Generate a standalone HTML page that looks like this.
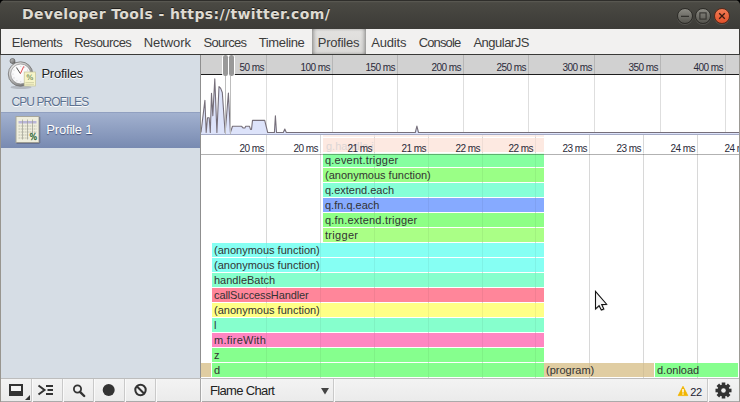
<!DOCTYPE html>
<html><head><meta charset="utf-8"><title>Developer Tools</title>
<style>
*{box-sizing:border-box;margin:0;padding:0}
html,body{width:740px;height:402px;overflow:hidden;background:#000}
body{font-family:"Liberation Sans","DejaVu Sans",sans-serif;font-size:13px;color:#222;position:relative}
div,span,svg{position:absolute}
#win{left:0;top:0;width:740px;height:402px;background:#3c3b37;border-radius:5px 5px 0 0;overflow:hidden}
#titlebar{left:0;top:0;width:740px;height:29px;background:linear-gradient(#2f2e2b 0,#2f2e2b 1px,#605f58 1px,#504f49 2px,#4a4943 3px,#3c3b37 100%);border-radius:5px 5px 0 0}
#title{left:22px;top:5px;font-family:"DejaVu Sans","Liberation Sans",sans-serif;font-weight:bold;font-size:14px;line-height:18px;color:#dfdbd2;white-space:nowrap;letter-spacing:0.38px;text-shadow:0 -1px 0 #22211f}
.wb{top:7.5px;width:16px;height:16px;border-radius:50%;border:1px solid #2d2c28;background:linear-gradient(#8b8a83,#55544e);box-shadow:0 1px 0 rgba(255,255,255,.12)}
#tabs{left:1px;top:29px;width:738px;height:26px;background:#f2f1f0;border-bottom:1px solid #3a3a38}
.tab{top:6px;line-height:16px;font-size:13px;color:#3c3c3c;white-space:nowrap}
#seltab{left:311px;top:0;width:54px;height:25px;background:linear-gradient(#e3e2e0,#dad9d7);box-shadow:inset 3px 0 4px -2px rgba(0,0,0,.45),inset -3px 0 4px -2px rgba(0,0,0,.45)}
#side{left:1px;top:55px;width:199px;height:323px;background:#d6dde5}
#sep{left:200px;top:55px;width:1px;height:347px;background:#8f8f8f}
#main{left:201px;top:55px;width:538px;height:323px;background:#fff;overflow:hidden}
#status{left:1px;top:378px;width:738px;height:24px;background:linear-gradient(#f3f3f3,#ebebeb);border-top:1px solid #bdbdbd;border-bottom:1px solid #aaa}
#lb{left:0;top:55px;width:1px;height:347px;background:#98958f}
#rb{left:739px;top:29px;width:1px;height:373px;background:linear-gradient(#3c3b37 0,#3c3b37 26px,#9c9a95 26px)}
.sh{font-size:13px;line-height:16px;white-space:nowrap}
#oruler{left:0;top:0;width:538px;height:20px;background:#d1d1d1;border-bottom:1px solid #1c1c1c}
.ol{top:7px;font-size:10px;line-height:12px;letter-spacing:-0.6px;color:#2b2b3a;white-space:nowrap;text-align:right;width:60px}
.og{top:0;width:1px;height:80px;background:rgba(0,0,0,.13)}
.fg{top:80px;width:1px;height:243px;background:rgba(0,0,0,.05)}
.fgu{top:80px;width:1px;height:243px;background:#e4e4e4}
.fl{top:88px;font-size:10px;line-height:12px;letter-spacing:-0.6px;color:#2b2b3a;white-space:nowrap;text-align:right;width:60px}
.bar{height:14px;font-size:11px;line-height:14px;color:#333;white-space:nowrap;overflow:hidden;padding-left:2px}
.sbsep{top:0;width:1px;height:23px;background:#c9c9c9;box-shadow:1px 0 0 #fafafa}
</style></head><body>
<div id="win">
 <div id="titlebar">
  <div id="title">Developer Tools - https://twitter.com/</div>
  <div class="wb" style="left:677.4px"><svg width="14" height="14" viewBox="0 0 14 14" style="left:0;top:0"><path d="M3 7.4h8" stroke="#33322e" stroke-width="1.2"/></svg></div>
  <div class="wb" style="left:695.3px"><svg width="14" height="14" viewBox="0 0 14 14" style="left:0;top:0"><rect x="3.9" y="3.9" width="6.2" height="6.2" fill="none" stroke="#33322e" stroke-width="1.1"/></svg></div>
  <div class="wb" style="left:713.5px;background:linear-gradient(#f37c55,#e2512a);border-color:#5a2a1a"><svg width="14" height="14" viewBox="0 0 14 14" style="left:0;top:0"><path d="M4.2 4.2l5.6 5.6M9.8 4.2l-5.6 5.6" stroke="#3a1a10" stroke-width="1.3"/></svg></div>
 </div>
 <div id="tabs"><div id="seltab"></div>
<span class="tab" style="left:10.75px;letter-spacing:-0.463px">Elements</span>
<span class="tab" style="left:73.25px;letter-spacing:-0.571px">Resources</span>
<span class="tab" style="left:142.75px;letter-spacing:-0.063px">Network</span>
<span class="tab" style="left:202.50px;letter-spacing:-0.707px">Sources</span>
<span class="tab" style="left:257.75px;letter-spacing:-0.364px">Timeline</span>
<span class="tab" style="left:316.75px;letter-spacing:-0.232px">Profiles</span>
<span class="tab" style="left:370.25px;letter-spacing:-0.190px">Audits</span>
<span class="tab" style="left:417.65px;letter-spacing:-0.843px">Console</span>
<span class="tab" style="left:472.45px;letter-spacing:-0.509px">AngularJS</span>
</div>
<div id="side">
 <svg style="left:5px;top:2px" width="34" height="34" viewBox="0 0 34 34">
  <defs><radialGradient id="cg" cx="0.4" cy="0.35" r="0.75"><stop offset="0" stop-color="#fff"/><stop offset="0.8" stop-color="#f4f4f6"/><stop offset="1" stop-color="#d5d5d8"/></radialGradient>
  <linearGradient id="rg" x1="0.15" y1="0.1" x2="0.85" y2="0.95"><stop offset="0" stop-color="#e9e9e9"/><stop offset="0.45" stop-color="#b5b5b5"/><stop offset="1" stop-color="#6b6b6b"/></linearGradient>
  <linearGradient id="kg" x1="0" y1="0" x2="1" y2="1"><stop offset="0" stop-color="#c9c9c9"/><stop offset="1" stop-color="#666"/></linearGradient></defs>
  <ellipse cx="15" cy="30.3" rx="10.5" ry="1.8" fill="rgba(60,60,70,.22)"/>
  <path d="M6.6 4.4l3.2 3.4" stroke="#7a7a7a" stroke-width="3.2"/>
  <circle cx="6.5" cy="4" r="2.5" fill="url(#kg)" stroke="#5e5e5e" stroke-width="0.7"/>
  <circle cx="14.5" cy="17" r="12.2" fill="url(#rg)" stroke="#707070" stroke-width="0.8"/>
  <circle cx="14.7" cy="17" r="10" fill="url(#cg)" stroke="#909090" stroke-width="0.7"/>
  <g fill="#c6c6cc"><circle cx="14.8" cy="9.2" r="0.55"/><circle cx="18.7" cy="10.2" r="0.55"/><circle cx="10.9" cy="10.2" r="0.55"/><circle cx="8" cy="13.1" r="0.55"/><circle cx="7" cy="17" r="0.55"/><circle cx="8" cy="20.9" r="0.55"/><circle cx="10.9" cy="23.8" r="0.55"/><circle cx="14.8" cy="24.8" r="0.55"/><circle cx="21.6" cy="13.1" r="0.55"/></g>
  <path d="M14.4 16.6L10.5 10.6" stroke="#3c3c3c" stroke-width="0.9"/>
  <path d="M14.4 16.6L17.8 9.3" stroke="#e0343a" stroke-width="0.9"/>
  <rect x="18.2" y="15" width="11.4" height="14" fill="#f6f4c8" stroke="#c4c29a" stroke-width="0.7"/>
  <text x="23.9" y="22.9" font-size="7.5" text-anchor="middle" fill="#4f7041" font-family="DejaVu Sans, sans-serif">%</text>
  <path d="M19.4 25.5h8.6M19.4 27.3h8.6" stroke="#c9c79e" stroke-width="0.7"/>
 </svg>
 <span class="sh" style="left:40.4px;top:11px;letter-spacing:-0.22px;color:#222;text-shadow:0 1px 0 #fff">Profiles</span>
 <span style="left:10.6px;top:40px;font-size:12px;line-height:14px;letter-spacing:-0.95px;color:#5d7190;text-shadow:0 1px 0 rgba(255,255,255,.9);white-space:nowrap">CPU PROFILES</span>
 <div style="left:0;top:57px;width:199px;height:36px;background:linear-gradient(#a2b1cf,#788ab1);border-top:1px solid #91a0c0"></div>
 <svg style="left:13px;top:60px" width="28" height="30" viewBox="0 0 28 30">
  <rect x="2" y="1.5" width="23" height="26" fill="#efeedd" stroke="#a8a79a" stroke-width="1"/>
  <path d="M2.5 28.3h23M25.8 2v26" stroke="rgba(60,60,80,.45)" stroke-width="1"/>
  <rect x="4.5" y="6" width="18" height="2.5" fill="#b9b6d8"/>
  <path d="M4.5 11h18M4.5 14h18M4.5 17h18M4.5 20h10M4.5 23h10" stroke="#a9a99a" stroke-width="0.7" stroke-dasharray="1.5 0.7"/>
  <path d="M8.5 4.5v20M13.5 4.5v20M18.5 4.5v14" stroke="#9c9c90" stroke-width="0.7"/>
  <text x="19.2" y="25.4" font-size="8" text-anchor="middle" fill="#2b6636" stroke="#2b6636" stroke-width="0.3" font-family="DejaVu Sans, sans-serif">%</text>
 </svg>
 <span class="sh" style="left:45.3px;top:67px;letter-spacing:-0.19px;color:#fff;text-shadow:0 1px 1px rgba(40,50,90,.7)">Profile 1</span>
</div>
<div id="sep"></div><div id="lb"></div><div id="rb"></div>
<div id="main">
<div id="oruler"></div>
<div class="og" style="left:65px"></div><span class="ol" style="left:2.8px">50 ms</span>
<div class="og" style="left:131px"></div><span class="ol" style="left:68.8px">100 ms</span>
<div class="og" style="left:196px"></div><span class="ol" style="left:133.8px">150 ms</span>
<div class="og" style="left:262px"></div><span class="ol" style="left:199.8px">200 ms</span>
<div class="og" style="left:327px"></div><span class="ol" style="left:264.8px">250 ms</span>
<div class="og" style="left:393px"></div><span class="ol" style="left:330.8px">300 ms</span>
<div class="og" style="left:459px"></div><span class="ol" style="left:396.8px">350 ms</span>
<div class="og" style="left:524px"></div><span class="ol" style="left:461.8px">400 ms</span>
<svg style="left:0;top:0" width="538" height="80" viewBox="0 0 538 80"><polygon points="0.0,77.5 3.9,45.3 5.2,77.5 6.5,62.7 8.2,62.7 9.3,77.5 10.5,38.4 11.8,60.6 13.8,23.9 15.9,77.5 18.0,31.5 19.7,33.4 21.3,37.5 24.1,77.5 25.3,64.1 27.4,38.0 29.4,77.5 31.5,71.3 40.6,71.3 42.2,73.0 43.9,73.0 44.7,71.3 48.5,71.3 49.5,74.4 50.5,74.4 51.5,65.4 63.7,65.4 66.7,77.5 73.4,77.5 74.4,60.7 75.5,77.5 82.3,77.5 83.8,74.0 85.3,77.5 214.3,77.5 215.9,71.1 217.5,77.5 538.0,77.5 538,80 0,80" fill="#dde3fa"/><polyline points="0.0,77.5 3.9,45.3 5.2,77.5 6.5,62.7 8.2,62.7 9.3,77.5 10.5,38.4 11.8,60.6 13.8,23.9 15.9,77.5 18.0,31.5 19.7,33.4 21.3,37.5 24.1,77.5 25.3,64.1 27.4,38.0 29.4,77.5 31.5,71.3 40.6,71.3 42.2,73.0 43.9,73.0 44.7,71.3 48.5,71.3 49.5,74.4 50.5,74.4 51.5,65.4 63.7,65.4 66.7,77.5 73.4,77.5 74.4,60.7 75.5,77.5 82.3,77.5 83.8,74.0 85.3,77.5 214.3,77.5 215.9,71.1 217.5,77.5 538.0,77.5" fill="none" stroke="#766f7a" stroke-width="1.1" stroke-linejoin="round"/></svg>
<div style="left:0;top:79px;width:538px;height:1px;background:#a4aac5"></div>
<div style="left:24px;top:20px;width:1px;height:59px;background:#bdbdbd"></div><div style="left:29px;top:20px;width:1px;height:59px;background:#bdbdbd"></div>
<div style="left:21px;top:0;width:12.6px;height:20.5px;background:#fff;border-radius:2.5px"></div><div style="left:22px;top:0;width:4.6px;height:20.5px;background:#999;border-radius:2.2px"></div>
<div style="left:28px;top:0;width:4.6px;height:20.5px;background:#999;border-radius:2.2px"></div>
<div class="fgu" style="left:65px"></div>
<div class="fgu" style="left:119px"></div>
<div class="fgu" style="left:173px"></div>
<div class="fgu" style="left:227px"></div>
<div class="fgu" style="left:281px"></div>
<div class="fgu" style="left:334px"></div>
<div class="fgu" style="left:388px"></div>
<div class="fgu" style="left:442px"></div>
<div class="fgu" style="left:496px"></div>
<div style="left:122px;top:80px;width:221px;height:2px;background:#fef0ea"></div>
<div style="left:122px;top:83px;width:221px;height:14px;background:#fde9e1"></div>
<span style="left:125px;top:84px;font-size:11px;line-height:14px;color:#dcd6d5;white-space:nowrap">g.handle.i</span>
<div class="bar" style="left:122px;top:98px;width:221px;background:#86ffa0;letter-spacing:0.2px">q.event.trigger</div>
<div class="bar" style="left:122px;top:113px;width:221px;background:#9aff86">(anonymous function)</div>
<div class="bar" style="left:122px;top:128px;width:221px;background:#86ffd7">q.extend.each</div>
<div class="bar" style="left:122px;top:143px;width:221px;background:#86aaff">q.fn.q.each</div>
<div class="bar" style="left:122px;top:158px;width:221px;background:#8eff86;letter-spacing:0.2px">q.fn.extend.trigger</div>
<div class="bar" style="left:122px;top:173px;width:221px;background:#aaff86;letter-spacing:0.3px">trigger</div>
<div class="bar" style="left:11px;top:188px;width:332px;background:#86fff3">(anonymous function)</div>
<div class="bar" style="left:11px;top:203px;width:332px;background:#86fff3">(anonymous function)</div>
<div class="bar" style="left:11px;top:218px;width:332px;background:#86ffcd">handleBatch</div>
<div class="bar" style="left:11px;top:233px;width:332px;background:#ff869a;letter-spacing:-0.11px">callSuccessHandler</div>
<div class="bar" style="left:11px;top:248px;width:332px;background:#ffff86">(anonymous function)</div>
<div class="bar" style="left:11px;top:263px;width:332px;background:#86ffcd">l</div>
<div class="bar" style="left:11px;top:278px;width:332px;background:#ff86c2;letter-spacing:0.25px">m.fireWith</div>
<div class="bar" style="left:11px;top:293px;width:332px;background:#86ff8e">z</div>
<div class="bar" style="left:11px;top:308px;width:332px;background:#86ff8e">d</div>
<div class="bar" style="left:0px;top:308px;width:10px;background:#e0cda2"></div>
<div class="bar" style="left:343px;top:308px;width:110px;background:#e0cda2">(program)</div>
<div class="bar" style="left:454px;top:308px;width:83px;background:#86ff8e">d.onload</div>
<div style="left:0;top:98px;width:538px;height:1px;background:rgba(255,255,255,.8)"></div><div style="left:0;top:99px;width:538px;height:1px;background:rgba(0,0,0,.3)"></div>
<div class="fg" style="left:65px"></div><span class="fl" style="left:2.8px">20 ms</span>
<div class="fg" style="left:119px"></div><span class="fl" style="left:56.8px">20 ms</span>
<div class="fg" style="left:173px"></div><span class="fl" style="left:110.8px">21 ms</span>
<div class="fg" style="left:227px"></div><span class="fl" style="left:164.8px">21 ms</span>
<div class="fg" style="left:281px"></div><span class="fl" style="left:218.8px">22 ms</span>
<div class="fg" style="left:334px"></div><span class="fl" style="left:271.8px">22 ms</span>
<div class="fg" style="left:388px"></div><span class="fl" style="left:325.8px">23 ms</span>
<div class="fg" style="left:442px"></div><span class="fl" style="left:379.8px">23 ms</span>
<div class="fg" style="left:496px"></div><span class="fl" style="left:433.8px">24 ms</span>
<div class="fg" style="left:550px"></div><span class="fl" style="left:487.8px">24 ms</span>
</div>
<svg style="left:594px;top:290px" width="18" height="24" viewBox="0 0 18 24"><path d="M2.3 2.6V20l3.6-3.3 2.2 4.3 2.6-1.1-2.1-4.3 4.9-.3z" fill="rgba(0,0,0,.18)"/><path d="M1.5 1.4V19l3.6-3.3 2.2 4.3 2.5-1.1-2.1-4.3 4.9-.4z" fill="#f6f6f6" stroke="#111" stroke-width="1.1" stroke-linejoin="miter"/></svg>
<div id="status">
 <div class="sbsep" style="left:30px"></div><div class="sbsep" style="left:61px"></div><div class="sbsep" style="left:92px"></div><div class="sbsep" style="left:123px"></div><div class="sbsep" style="left:154px"></div>
 <div class="sbsep" style="left:199px;background:#a8a8a8"></div><div class="sbsep" style="left:332px"></div><div class="sbsep" style="left:706px"></div>
 <svg style="left:0;top:0" width="200" height="23" viewBox="0 0 200 23">
  <rect x="8" y="5" width="14" height="12" fill="#333"/><rect x="10" y="7" width="10" height="5" fill="#f4f4f4"/>
  <path d="M29 16v5h-5z" fill="#333"/>
  <path d="M37.5 6.5l6 4.5-6 4.5" fill="none" stroke="#333" stroke-width="2"/><path d="M45 7h7M46.5 11h5.5M45 15h7" stroke="#333" stroke-width="2"/>
  <circle cx="76.5" cy="10" r="3.6" fill="none" stroke="#333" stroke-width="1.8"/><path d="M79 12.8l4.2 4.2" stroke="#333" stroke-width="2.4" stroke-linecap="round"/>
  <circle cx="107.7" cy="11" r="6" fill="#333"/>
  <circle cx="139.5" cy="11" r="5.2" fill="none" stroke="#333" stroke-width="2"/><path d="M135.8 7.3l7.4 7.4" stroke="#333" stroke-width="2"/>
 </svg>
 <span class="sh" style="left:209px;top:4px;letter-spacing:-0.66px;color:#222">Flame Chart</span>
 <svg style="left:319px;top:8px" width="10" height="8" viewBox="0 0 10 8"><path d="M1 1h8l-4 6.5z" fill="#444"/></svg>
 <svg style="left:676px;top:6px" width="12" height="12" viewBox="0 0 12 12"><path d="M6 1.3L10.8 10.6H1.2z" fill="#f1b500" stroke="#f1b500" stroke-width="0.8" stroke-linejoin="round"/><path d="M6 4v3.4" stroke="#fff" stroke-width="1.5"/><circle cx="6" cy="9" r="0.8" fill="#fff"/></svg>
 <span style="left:689.3px;top:6px;font-size:11px;line-height:14px;letter-spacing:-0.4px;color:#223;white-space:nowrap">22</span>
 <svg style="left:712.5px;top:1.5px" width="19" height="19" viewBox="-9.5 -9.5 19 19"><g fill="#333">
  <circle r="6"/>
<rect x="-1.8" y="-8" width="3.6" height="4" transform="rotate(0)"/>
<rect x="-1.8" y="-8" width="3.6" height="4" transform="rotate(45)"/>
<rect x="-1.8" y="-8" width="3.6" height="4" transform="rotate(90)"/>
<rect x="-1.8" y="-8" width="3.6" height="4" transform="rotate(135)"/>
<rect x="-1.8" y="-8" width="3.6" height="4" transform="rotate(180)"/>
<rect x="-1.8" y="-8" width="3.6" height="4" transform="rotate(225)"/>
<rect x="-1.8" y="-8" width="3.6" height="4" transform="rotate(270)"/>
<rect x="-1.8" y="-8" width="3.6" height="4" transform="rotate(315)"/>
</g><circle r="2.3" fill="#efefef"/></svg>
</div>
</div>
</body></html>
